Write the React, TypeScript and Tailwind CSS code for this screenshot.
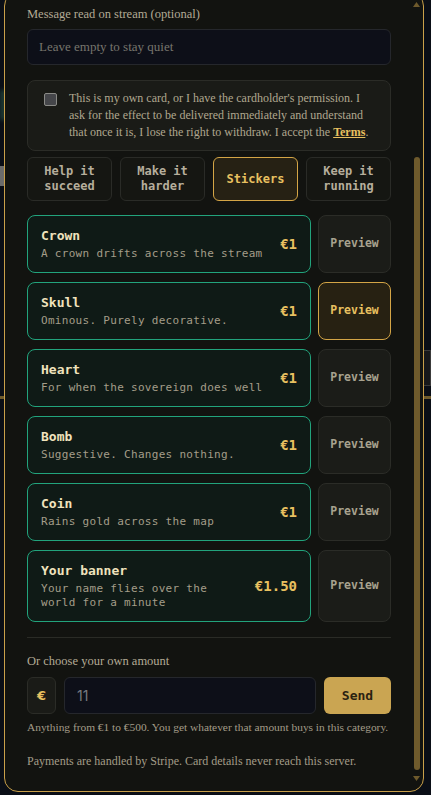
import { useState } from 'react';

const serif = "font-['Liberation_Serif','DejaVu_Serif',serif]";
const mono = "font-['DejaVu_Sans_Mono','Liberation_Mono',monospace]";

const stickers = [
  { name: 'Crown', desc: 'A crown drifts across the stream', price: '€1' },
  { name: 'Skull', desc: 'Ominous. Purely decorative.', price: '€1' },
  { name: 'Heart', desc: 'For when the sovereign does well', price: '€1' },
  { name: 'Bomb', desc: 'Suggestive. Changes nothing.', price: '€1' },
  { name: 'Coin', desc: 'Rains gold across the map', price: '€1' },
  { name: 'Your banner', desc: 'Your name flies over the world for a minute', price: '€1.50' },
];

const tabs = ['Help it succeed', 'Make it harder', 'Stickers', 'Keep it running'];

export default function App() {
  const [tab, setTab] = useState('Stickers');
  const [preview, setPreview] = useState('Skull');
  const [agreed, setAgreed] = useState(false);

  return (
    <div className="relative h-[795px] w-full overflow-hidden bg-[#0a0e16]">
      {/* map behind the sheet */}
      <div className="absolute left-0 top-[90px] h-[30px] w-[6px] bg-[#1d3a34] blur-[2px]" />
      <div className="absolute left-0 top-[166px] h-[20px] w-[6px] bg-[#6b6b6b]" />
      <div className="absolute right-0 top-[350px] h-[36px] w-[10px] border border-[#3a3a3a] bg-[#17181a]" />
      <div className="absolute left-0 right-0 top-[396px] h-[3px] bg-[#6e5a2c]" />

      <div className="relative ml-[4px] mt-[-8px] flex h-[800px] w-[420px] rounded-[14px] border border-[#c9a04a] bg-[#121310]">
        <div className="flex flex-1 flex-col pl-[22px] pr-[22px] pt-[13px]">
          <label className={`${serif} text-[12.5px] leading-[16px] text-[#b3aa95]`}>Message read on stream (optional)</label>
          <input
            placeholder="Leave empty to stay quiet"
            className={`${serif} mt-[7px] h-[36px] w-full rounded-[6px] border border-[#25272c] bg-[#0d0f18] px-[11px] text-[13px] text-[#d8d0b8] outline-none placeholder:text-[#77756d]`}
          />

          <div className="mt-[15px] flex gap-[12px] rounded-[8px] border border-[#2b2c27] bg-[#1a1b17] py-[9px] pl-[16px] pr-[20px]">
            <button
              onClick={() => setAgreed(!agreed)}
              className="mt-[3px] h-[13px] w-[13px] shrink-0 rounded-[2px] border border-[#8a8a86] bg-[#45464a]"
            >
              {agreed && <span className="block text-[10px] leading-[11px] text-white">✓</span>}
            </button>
            <p className={`${serif} text-[12px] leading-[17px] text-[#b0a78f]`}>
              This is my own card, or I have the cardholder's permission. I ask for the effect to be delivered immediately and understand that once it is, I lose the right to withdraw. I accept the{' '}
              <a className="font-bold text-[#e8c060] underline">Terms</a>.
            </p>
          </div>

          <div className="mt-[6px] grid grid-cols-4 gap-[8px]">
            {tabs.map(t => (
              <button
                key={t}
                onClick={() => setTab(t)}
                className={
                  t === tab
                    ? `${mono} h-[44px] rounded-[6px] border border-[#d4a546] bg-[#262114] px-2 text-[12px] font-bold leading-[15px] text-[#e8c060]`
                    : `${mono} h-[44px] rounded-[6px] border border-[#2a2b27] bg-[#151612] px-2 text-[12px] font-bold leading-[15px] text-[#b6ae9c]`
                }
              >
                {t}
              </button>
            ))}
          </div>

          <div className="mt-[14px] flex flex-col gap-[9px]">
            {stickers.map(s => (
              <div key={s.name} className="flex gap-[7px]">
                <div className="flex min-h-[58px] flex-1 items-center gap-3 rounded-[8px] border border-[#22a37c] bg-[#0f1a16] py-[11px] pl-[13px] pr-[13px]">
                  <div className="flex-1">
                    <div className={`${mono} text-[13px] font-bold leading-[17px] text-[#f0e2bd]`}>{s.name}</div>
                    <div className={`${mono} mt-[3px] text-[11px] leading-[14px] tracking-[0.3px] text-[#a49d89]`}>{s.desc}</div>
                  </div>
                  <div className={`${mono} text-[14px] font-bold text-[#e8c060]`}>{s.price}</div>
                </div>
                <button
                  onClick={() => setPreview(s.name)}
                  className={
                    preview === s.name
                      ? `${mono} w-[73px] rounded-[8px] border border-[#d4a546] bg-[#272112] text-[11.5px] font-bold text-[#e8c060]`
                      : `${mono} w-[73px] rounded-[8px] border border-[#2b2c27] bg-[#1b1c18] text-[11.5px] font-bold text-[#a8a28f]`
                  }
                >
                  Preview
                </button>
              </div>
            ))}
          </div>

          <div className="mt-[15px] h-px bg-[#2a2b26]" />

          <p className={`${serif} mt-[15px] text-[12.5px] leading-[16px] text-[#b3aa95]`}>Or choose your own amount</p>
          <div className="mt-[8px] flex h-[37px] gap-[8px]">
            <div className="flex w-[29px] items-center justify-center rounded-[6px] border border-[#2b2c27] bg-[#1a1b17] text-[13px] font-bold text-[#e8c060] font-['DejaVu_Sans',sans-serif]">€</div>
            <input
              defaultValue="11"
              className="flex-1 rounded-[6px] border border-[#25272c] bg-[#0d0f18] px-[12px] text-[14px] text-[#777a80] outline-none font-['Inter',sans-serif]"
            />
            <button className={`${mono} w-[67px] rounded-[6px] bg-[#caa552] text-[13px] font-bold text-[#2a2211]`}>Send</button>
          </div>
          <p className={`${serif} mt-[6px] whitespace-nowrap text-[11.4px] leading-[14px] text-[#a39c88]`}>
            Anything from €1 to €500. You get whatever that amount buys in this category.
          </p>
          <p className={`${serif} mt-[20px] text-[12px] leading-[14px] text-[#a39c88]`}>
            Payments are handled by Stripe. Card details never reach this server.
          </p>
        </div>

        {/* scrollbar */}
        <div className="flex w-[10px] flex-col items-center pr-[3px] pt-[9px] pb-[10px]">
          <svg width="7" height="5" viewBox="0 0 7 5"><path d="M3.5 0L7 5H0z" fill="#6e5a2c" /></svg>
          <div className="mt-[150px] w-[6px] flex-1 rounded-full bg-[#6e5a2c]" />
          <svg className="mt-[6px]" width="7" height="5" viewBox="0 0 7 5"><path d="M0 0H7L3.5 5z" fill="#6e5a2c" /></svg>
        </div>
      </div>
    </div>
  );
}
